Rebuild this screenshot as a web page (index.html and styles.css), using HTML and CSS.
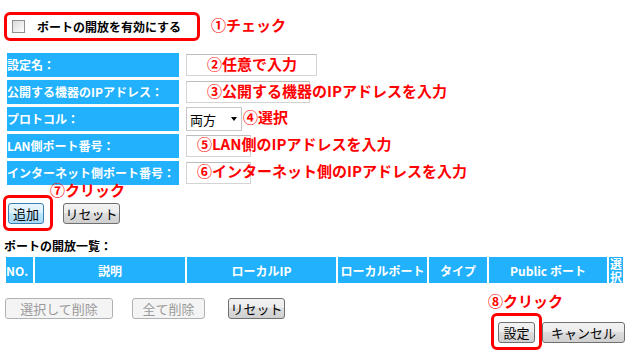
FILE: index.html
```html
<!DOCTYPE html>
<html lang="ja">
<head>
    <meta charset="UTF-8">
    <title>ポートの開放</title>
    <link rel="stylesheet" href="styles.css">
</head>
<body>
    <div class="page">
        <div class="enable-row">
            <span class="check"></span>
            <span class="enable-label">ポートの開放を有効にする</span>
        </div>

        <div class="form">
            <div class="label">設定名：</div>
            <div class="field"><span class="box w-name"></span></div>
            <div class="label">公開する機器のIPアドレス：</div>
            <div class="field"><span class="box w-ip"></span></div>
            <div class="label">プロトコル：</div>
            <div class="field">
                <span class="select">両方<span class="arrow"></span></span>
            </div>
            <div class="label">LAN側ポート番号：</div>
            <div class="field"><span class="box w-port"></span></div>
            <div class="label">インターネット側ポート番号：</div>
            <div class="field"><span class="box w-port"></span></div>
        </div>

        <div class="actions">
            <button class="btn focus w-add">追加</button>
            <button class="btn w-reset">リセット</button>
        </div>

        <div class="list-title">ポートの開放一覧：</div>
        <table class="list">
            <tr>
                <th class="c-no">NO.</th>
                <th class="c-desc">説明</th>
                <th class="c-ip">ローカルIP</th>
                <th class="c-lport">ローカルポート</th>
                <th class="c-type">タイプ</th>
                <th class="c-pport">Public ポート</th>
                <th class="c-sel">選択</th>
            </tr>
        </table>

        <div class="list-actions">
            <button class="btn off w-seldel">選択して削除</button>
            <button class="btn off w-alldel">全て削除</button>
            <button class="btn w-reset">リセット</button>
        </div>

        <div class="submit">
            <button class="btn w-ok">設定</button>
            <button class="btn w-cancel">キャンセル</button>
        </div>

        <!-- annotations -->
        <div class="mark mark-1"></div>
        <div class="mark mark-2"></div>
        <div class="mark mark-3"></div>
        <div class="note n1">①チェック</div>
        <div class="note n2">②任意で入力</div>
        <div class="note n3">③公開する機器のIPアドレスを入力</div>
        <div class="note n4">④選択</div>
        <div class="note n5">⑤LAN側のIPアドレスを入力</div>
        <div class="note n6">⑥インターネット側のIPアドレスを入力</div>
        <div class="note n7">⑦クリック</div>
        <div class="note n8">⑧クリック</div>
    </div>
</body>
</html>
```

FILE: styles.css
```css
body {
    margin: 0;
    background: #fff;
    font-family: "Noto Sans CJK JP", "Liberation Sans", sans-serif;
    font-size: 12px;
    color: #000;
}
.page {
    position: relative;
    width: 632px;
    height: 353px;
    padding-top: 12px;
    box-sizing: border-box;
}
.enable-row {
    display: flex;
    align-items: center;
    height: 28px;
    padding-left: 12px;
}
.check {
    width: 11px;
    height: 11px;
    border: 1px solid #8e8f8f;
    background: linear-gradient(135deg, #dcdcdc, #fdfdfd);
}
.enable-label {
    margin-left: 12px;
    font-weight: bold;
    font-size: 12px;
}
.form {
    display: grid;
    grid-template-columns: 172px auto;
    column-gap: 7px;
    row-gap: 3px;
    margin: 13px 0 0 7px;
}
.label {
    height: 24px;
    line-height: 24px;
    background: #21b1fd;
    color: #fff;
    font-weight: bold;
    white-space: nowrap;
    overflow: hidden;
}
.field {
    display: flex;
    align-items: center;
}
.box {
    height: 20px;
    border: 1px solid #d4d4d4;
    border-top-color: #bcbcbc;
    background: #fff;
}
.w-name { width: 129px; }
.w-ip { width: 122px; }
.w-port { width: 63px; }
.select {
    display: flex;
    align-items: center;
    justify-content: space-between;
    width: 47px;
    height: 22px;
    padding: 0 4px 0 3px;
    border: 1px solid #c8c8c8;
    font-size: 13px;
}
.arrow {
    width: 0;
    height: 0;
    border-left: 3px solid transparent;
    border-right: 3px solid transparent;
    border-top: 4px solid #000;
}
.btn {
    height: 21px;
    padding: 0;
    border: 1px solid #707070;
    border-radius: 3px;
    background: linear-gradient(#f2f2f2, #ebebeb 50%, #dddddd 50%, #cfcfcf);
    font-family: inherit;
    font-size: 13px;
    line-height: 18px;
    color: #000;
}
.btn.focus {
    border-color: #3c7fb1;
    background: linear-gradient(#eaf6fd, #d9f0fc 50%, #bee6fd 50%, #a7d9f5);
}
.btn.off {
    border-color: #adb2b5;
    background: #f4f4f4;
    color: #9a9a9a;
}
.actions {
    display: flex;
    gap: 19px;
    margin: 18px 0 0 8px;
}
.w-add { width: 36px; }
.w-reset { width: 57px; }
.w-seldel { width: 108px; }
.w-alldel { width: 73px; }
.w-ok { width: 37px; }
.w-cancel { width: 83px; }
.list-title {
    margin: 14px 0 0 4px;
    font-weight: bold;
    line-height: 16px;
}
.list {
    margin: 1px 0 0 4px;
    width: 621px;
    border-spacing: 2px;
    table-layout: fixed;
}
.list th {
    height: 26px;
    padding: 0;
    background: #21b1fd;
    color: #fff;
    font-size: 12px;
    font-weight: bold;
    text-align: center;
    white-space: nowrap;
}
.list .c-no { width: 27px; text-align: left; }
.list .c-desc { width: 150px; }
.list .c-ip { width: 149px; }
.list .c-lport { width: 89px; }
.list .c-type { width: 58px; }
.list .c-pport { width: 118px; }
.list .c-sel {
    width: 14px;
    white-space: normal;
    line-height: 13px;
    font-size: 12px;
}
.list-actions {
    display: flex;
    gap: 19px;
    margin: 13px 0 0 5px;
}
.list-actions .w-reset { margin-left: 4px; }
.submit {
    display: flex;
    justify-content: flex-end;
    gap: 7px;
    margin: 3px 7px 0 0;
}
.mark {
    position: absolute;
    border: 3px solid #f00;
    border-radius: 6px;
    box-sizing: border-box;
}
.mark-1 { left: 4px; top: 12px; width: 196px; height: 29px; }
.mark-2 { left: 3px; top: 195px; width: 50px; height: 36px; }
.mark-3 { left: 491px; top: 313px; width: 51px; height: 37px; }
.note {
    position: absolute;
    color: #f00;
    font-weight: bold;
    font-size: 15px;
    line-height: 18px;
    white-space: nowrap;
}
.n1 { left: 211px; top: 16px; }
.n2 { left: 207px; top: 55px; }
.n3 { left: 207px; top: 82px; }
.n4 { left: 243px; top: 108px; }
.n5 { left: 197px; top: 135px; }
.n6 { left: 197px; top: 162px; }
.n7 { left: 50px; top: 181px; }
.n8 { left: 488px; top: 292px; }
```
